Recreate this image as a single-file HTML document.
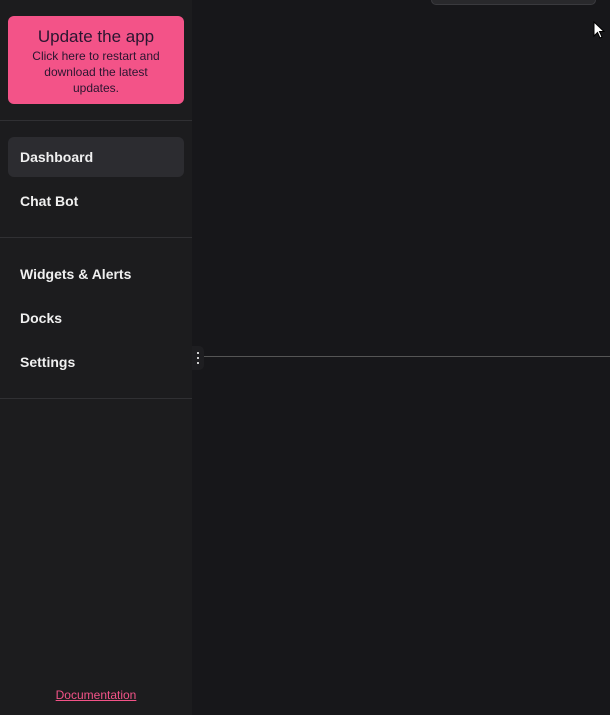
<!DOCTYPE html>
<html><head><style>
*{margin:0;padding:0;box-sizing:border-box}
body{width:610px;height:715px;background:#17171a;font-family:"Liberation Sans",sans-serif;position:relative;overflow:hidden}
.sb{position:absolute;left:0;top:0;width:192px;height:715px;background:#1c1c1e}
.upd{position:absolute;left:8px;top:16px;width:176px;height:88px;background:#f35388;border-radius:6px;text-align:center;color:#2a1530}
.upd h1{font-size:17px;font-weight:normal;margin-top:11px;line-height:20px}
.upd p{font-size:12px;line-height:16px;margin-top:1px;white-space:nowrap}
.hr{position:absolute;left:0;width:192px;height:1px;background:#303033}
.it{position:absolute;left:8px;width:176px;height:40px;border-radius:6px;color:#f0f0f0;font-weight:bold;font-size:14px;line-height:40px;padding-left:12px}
.act{background:#2c2c30}
.doc{position:absolute;left:0;width:192px;top:688px;text-align:center;color:#f35388;font-size:12px;text-decoration:underline}
.line{position:absolute;left:204px;top:356px;width:406px;height:1px;background:#555}
.grip{position:absolute;left:192px;top:346px;width:12px;height:24px;background:#1e1e21;border-radius:0 5px 5px 0}
.grip i{position:absolute;left:5px;width:2px;height:2px;background:#ccc}
.top{position:absolute;left:431px;top:-8px;width:165px;height:13px;background:#29292c;border:1px solid #3a3a3e;border-radius:5px}
</style></head><body>
<div class="sb">
<div class="upd"><h1>Update the app</h1><p>Click here to restart and<br>download the latest<br>updates.</p></div>
<div class="hr" style="top:120px"></div>
<div class="it act" style="top:137px">Dashboard</div>
<div class="it" style="top:181px">Chat Bot</div>
<div class="hr" style="top:237px"></div>
<div class="it" style="top:254px">Widgets &amp; Alerts</div>
<div class="it" style="top:298px">Docks</div>
<div class="it" style="top:342px">Settings</div>
<div class="hr" style="top:398px"></div>
<div class="doc">Documentation</div>
</div>
<div class="grip"><i style="top:6px"></i><i style="top:11px"></i><i style="top:16px"></i></div>
<div class="line"></div>
<div class="top"></div>
<svg style="position:absolute;left:593px;top:21px" width="12" height="19" viewBox="0 0 12 19"><path d="M1 1 L1 15 L4.5 11.5 L7 17 L9 16 L6.5 10.5 L11 10.5 Z" fill="#fff" stroke="#000" stroke-width="1"/></svg>
</body></html>
